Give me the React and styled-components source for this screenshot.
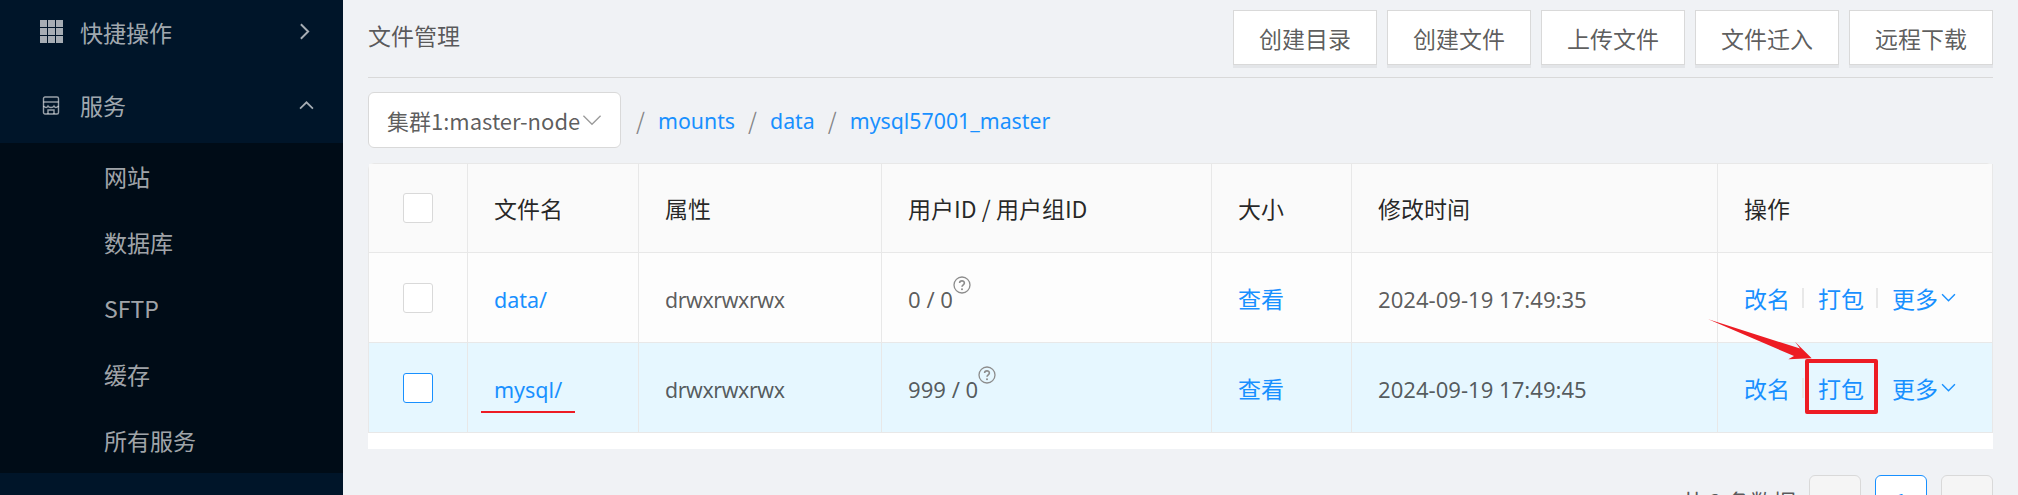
import React from "react";
import styled, { createGlobalStyle } from "styled-components";

const FONT = `"Noto Sans CJK SC", "Noto Sans", sans-serif`;
const LATIN = `"Noto Sans", "Noto Sans CJK SC", sans-serif`;
const BLUE = "#1890ff";
const RED = "#ed1c24";
const LINE = "#e8e8e8";

const GlobalStyle = createGlobalStyle`
  html, body {
    margin: 0;
    padding: 0;
    height: 495px;
    overflow: hidden;
    background: #f0f2f5;
    font-family: ${FONT};
  }
  * { box-sizing: border-box; }
`;

const Layout = styled.div`
  display: flex;
  width: 2018px;
  height: 495px;
  overflow: hidden;
`;

const Sidebar = styled.aside`
  width: 343px;
  flex-shrink: 0;
  background: #001529;
  color: rgba(255, 255, 255, 0.65);
  font-size: 23px;
`;

const MenuRow = styled.div`
  display: flex;
  align-items: center;
  height: ${(p) => p.$height}px;
  margin-bottom: ${(p) => p.$gap || 0}px;
  padding: 0 ${(p) => p.$right}px 0 ${(p) => p.$left}px;
  svg { flex-shrink: 0; }
`;

const MenuLabel = styled.span`
  flex: 1;
  margin-left: ${(p) => p.$gap}px;
`;

const SubMenu = styled.div`
  background: #000c17;
`;

const SubItem = styled.div`
  height: 66px;
  line-height: 66px;
  padding-left: 104px;
`;

const Main = styled.main`
  flex: 1;
  min-width: 0;
  padding: 10px 25px 0;
  font-size: 23px;
  color: rgba(0, 0, 0, 0.65);
`;

const TopBar = styled.div`
  display: flex;
  align-items: flex-start;
  justify-content: space-between;
  height: 68px;
  border-bottom: 1.5px solid #d9d9d9;
`;

const Title = styled.h1`
  margin: 9px 0 0;
  font-size: 23px;
  font-weight: 400;
  line-height: 32px;
  color: rgba(0, 0, 0, 0.65);
`;

const Actions = styled.div`
  display: flex;
  gap: 10px;
`;

const ToolButton = styled.button`
  width: 144px;
  height: 55px;
  padding: 0;
  border: 1.5px solid #d9d9d9;
  background: #fff;
  box-shadow: 0 3px 0 rgba(0, 0, 0, 0.05);
  font: inherit;
  color: rgba(0, 0, 0, 0.65);
`;

const PathBar = styled.div`
  display: flex;
  align-items: center;
  height: 56px;
  margin: 14px 0 15px;
`;

const Select = styled.div`
  display: flex;
  align-items: center;
  justify-content: space-between;
  width: 253px;
  height: 56px;
  padding: 0 18px 0 18px;
  background: #fff;
  border: 1.5px solid #d9d9d9;
  border-radius: 6px;
  font-size: 22px;
  white-space: nowrap;
  svg { flex-shrink: 0; }
`;

const Sep = styled.span`
  margin: 0 13px 0 ${(p) => p.$left || 13}px;
  color: rgba(0, 0, 0, 0.45);
`;

const Crumb = styled.a`
  font-family: ${LATIN};
  font-size: 21.3px;
  color: ${BLUE};
`;

const Card = styled.div`
  position: relative;
  width: 1625px;
  height: 286px;
  background: #fff;
  border-radius: 6px 6px 0 0;
`;

const Table = styled.table`
  width: 100%;
  table-layout: fixed;
  border-collapse: separate;
  border-spacing: 0;
  border-top: 1.5px solid ${LINE};
  border-left: 1.5px solid ${LINE};
  border-radius: 6px 6px 0 0;
`;

const Th = styled.th`
  height: 89px;
  padding: 0 0 0 26px;
  background: #fafafa;
  font-weight: 400;
  text-align: left;
  color: rgba(0, 0, 0, 0.85);
  border-right: 1.5px solid ${LINE};
  border-bottom: 1.5px solid ${LINE};
  &:first-child { padding: 0 0 0 34px; }
`;

const Row = styled.tr`
  background: ${(p) => (p.$active ? "#e6f7ff" : "#fdfdfd")};
`;

const Td = styled.td`
  height: 90px;
  padding: 0 0 0 26px;
  white-space: nowrap;
  border-right: 1.5px solid ${LINE};
  border-bottom: 1.5px solid ${LINE};
  &:first-child { padding: 0 0 0 34px; }
`;

const Check = styled.span`
  display: block;
  width: 30px;
  height: 30px;
  background: #fff;
  border: 1.5px solid ${(p) => (p.$active ? BLUE : "#d9d9d9")};
  border-radius: 3px;
`;

const Link = styled.a`
  color: ${BLUE};
`;

const FileName = styled(Link)`
  font-family: ${LATIN};
  font-size: 21.5px;
`;

const Mode = styled.span`
  font-family: ${LATIN};
  font-size: 21.3px;
  letter-spacing: -0.4px;
`;

const Digits = styled.span`
  font-family: ${LATIN};
  font-size: 22.1px;
`;

const Help = styled.sup`
  display: inline-block;
  vertical-align: baseline;
  position: relative;
  top: -14px;
  line-height: 0;
  svg { display: block; }
`;

const OpCell = styled.div`
  display: flex;
  align-items: center;
`;

const OpDivider = styled.i`
  width: 2px;
  height: 20px;
  margin: 0 14px 0 12px;
  background: ${LINE};
`;

const More = styled.span`
  display: inline-flex;
  align-items: center;
  gap: 3px;
  color: ${BLUE};
`;

const Underline = styled.div`
  position: absolute;
  left: 113px;
  top: 248px;
  width: 94px;
  height: 2px;
  background: ${RED};
`;

const RedBox = styled.div`
  position: absolute;
  left: 1437px;
  top: 196px;
  width: 73px;
  height: 55px;
  border: 4.5px solid ${RED};
  border-radius: 2px;
`;

const Arrow = styled.svg`
  position: absolute;
  left: 1335px;
  top: 150px;
`;

const Footer = styled.div`
  display: flex;
  align-items: center;
  justify-content: flex-end;
  margin-top: 26px;
  width: 1625px;
`;

const Total = styled.span`
  margin-right: 13px;
  color: rgba(0, 0, 0, 0.65);
`;

const PageBtn = styled.span`
  display: flex;
  align-items: center;
  justify-content: center;
  width: 52px;
  height: 52px;
  margin-left: ${(p) => (p.$first ? 0 : 14)}px;
  background: ${(p) => (p.$active ? "#fff" : "#f5f5f5")};
  border: 1.5px solid ${(p) => (p.$active ? BLUE : "#d9d9d9")};
  border-radius: 6px;
  color: ${(p) => (p.$active ? BLUE : "rgba(0,0,0,.25)")};
`;

const Chevron = ({ dir = "down", size = 14, color = "currentColor", width = 1.6 }) => {
  const paths = {
    down: "M1 4 L7 10 L13 4",
    up: "M1 10 L7 4 L13 10",
    right: "M4 1 L10 7 L4 13",
    left: "M10 1 L4 7 L10 13",
  };
  return (
    <svg width={size} height={size} viewBox="0 0 14 14" fill="none" stroke={color} strokeWidth={width}>
      <path d={paths[dir]} />
    </svg>
  );
};

const GridIcon = () => (
  <svg width="23" height="23" viewBox="0 0 23 23" fill="rgba(255,255,255,.65)">
    {[0, 8, 16].map((y) =>
      [0, 8, 16].map((x) => <rect key={`${x}-${y}`} x={x} y={y} width="7" height="7" />)
    )}
  </svg>
);

const ShopIcon = () => (
  <svg width="18" height="19" viewBox="0 0 18 19" fill="none" stroke="rgba(255,255,255,.6)" strokeWidth="1.4">
    <rect x="1.5" y="1" width="15" height="17" rx="1.5" />
    <path d="M1.5 6 H16.5" />
    <path d="M1.5 10 C3.5 12 5 12 6 10 C7 12 11 12 12 10 C13 12 14.5 12 16.5 10" />
    <path d="M6 18 V14 H12 V18" />
  </svg>
);

const HelpIcon = () => (
  <svg width="18" height="18" viewBox="0 0 18 18" fill="none">
    <circle cx="9" cy="9" r="8" stroke="#8c8c8c" strokeWidth="1.3" />
    <path d="M6.6 7 C6.6 4.2 11.4 4.2 11.4 7 C11.4 8.8 9 8.8 9 10.8" stroke="#8c8c8c" strokeWidth="1.6" />
    <circle cx="9" cy="13.2" r="1" fill="#8c8c8c" />
  </svg>
);

const ops = ["创建目录", "创建文件", "上传文件", "文件迁入", "远程下载"];
const columns = [99, 171, 243, 330, 140, 366, 275];
const heads = ["", "文件名", "属性", "用户ID / 用户组ID", "大小", "修改时间", "操作"];
const rows = [
  { name: "data/", owner: "0 / 0", time: "2024-09-19 17:49:35" },
  { name: "mysql/", owner: "999 / 0", time: "2024-09-19 17:49:45", active: true },
];

export default function App() {
  return (
    <Layout>
      <GlobalStyle />
      <Sidebar>
        <MenuRow $height={63} $gap={6} $left={40} $right={30}>
          <GridIcon />
          <MenuLabel $gap={17}>快捷操作</MenuLabel>
          <Chevron dir="right" size={17} />
        </MenuRow>
        <MenuRow $height={72} $gap={2} $left={42} $right={29}>
          <ShopIcon />
          <MenuLabel $gap={20}>服务</MenuLabel>
          <Chevron dir="up" size={15} />
        </MenuRow>
        <SubMenu>
          <SubItem>网站</SubItem>
          <SubItem>数据库</SubItem>
          <SubItem>SFTP</SubItem>
          <SubItem>缓存</SubItem>
          <SubItem>所有服务</SubItem>
        </SubMenu>
      </Sidebar>
      <Main>
        <TopBar>
          <Title>文件管理</Title>
          <Actions>
            {ops.map((op) => (
              <ToolButton key={op}>{op}</ToolButton>
            ))}
          </Actions>
        </TopBar>
        <PathBar>
          <Select>
            集群1:master-node
            <Chevron size={20} color="rgba(0,0,0,.4)" width={0.9} />
          </Select>
          <Sep $left={15}>/</Sep>
          <Crumb>mounts</Crumb>
          <Sep>/</Sep>
          <Crumb>data</Crumb>
          <Sep>/</Sep>
          <Crumb>mysql57001_master</Crumb>
        </PathBar>
        <Card>
          <Table>
            <colgroup>
              {columns.map((w, i) => (
                <col key={i} style={{ width: w }} />
              ))}
            </colgroup>
            <thead>
              <tr>
                {heads.map((h, i) => (
                  <Th key={i}>{i === 0 ? <Check /> : h}</Th>
                ))}
              </tr>
            </thead>
            <tbody>
              {rows.map((r) => (
                <Row key={r.name} $active={r.active}>
                  <Td><Check $active={r.active} /></Td>
                  <Td><FileName>{r.name}</FileName></Td>
                  <Td><Mode>drwxrwxrwx</Mode></Td>
                  <Td>
                    <Digits>{r.owner}</Digits>
                    <Help><HelpIcon /></Help>
                  </Td>
                  <Td><Link>查看</Link></Td>
                  <Td><Digits>{r.time}</Digits></Td>
                  <Td>
                    <OpCell>
                      <Link>改名</Link>
                      <OpDivider />
                      <Link>打包</Link>
                      <OpDivider />
                      <More>更多<Chevron size={15} width={1.3} /></More>
                    </OpCell>
                  </Td>
                </Row>
              ))}
            </tbody>
          </Table>
          <Underline />
          <RedBox />
          <Arrow width="110" height="48" viewBox="0 0 110 48">
            <path d="M5.3 6.3 L97 35.5 L92 28.7 L108.7 45.3 L85.3 46.3 L91 43 Z" fill={RED} />
          </Arrow>
        </Card>
        <Footer>
          <Total>共 2 条数据</Total>
          <PageBtn $first><Chevron dir="left" size={12} /></PageBtn>
          <PageBtn $active>1</PageBtn>
          <PageBtn><Chevron dir="right" size={12} /></PageBtn>
        </Footer>
      </Main>
    </Layout>
  );
}
